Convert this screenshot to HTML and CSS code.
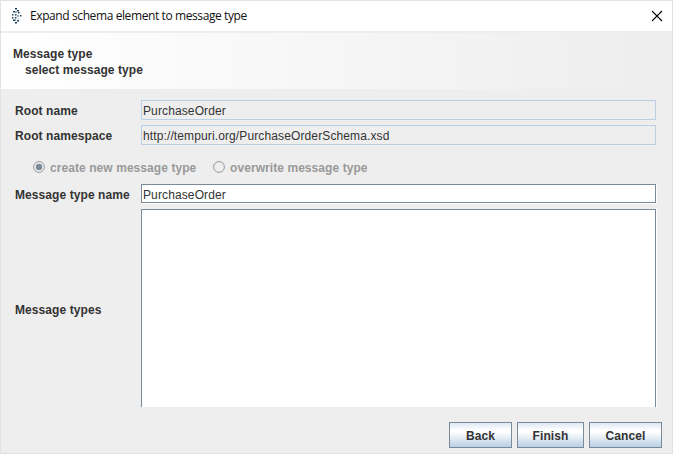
FILE: index.html
```html
<!DOCTYPE html>
<html lang="en">
<head>
<meta charset="utf-8">
<title>Expand schema element to message type</title>
<link rel="stylesheet" href="styles.css">
</head>
<body>
<div class="window">
  <header class="titlebar">
    <svg class="logo" width="12" height="18" viewBox="0 0 12 18">
      <g fill="#17405f">
        <rect x="4" y="1" width="2" height="1.5"/><rect x="6" y="3" width="2" height="1.5"/>
        <rect x="2" y="4" width="2" height="1.5"/><rect x="7" y="5" width="1.5" height="1.5"/>
        <rect x="1" y="7" width="1.5" height="1.5"/><rect x="4" y="7" width="1.5" height="1.5"/>
        <rect x="9" y="8" width="1.5" height="1.5"/><rect x="1" y="10" width="1.5" height="1.5"/>
        <rect x="4" y="10" width="1.5" height="1.5"/><rect x="2" y="12.5" width="2" height="1.5"/>
        <rect x="6" y="13" width="2" height="1.5"/><rect x="4" y="15" width="2" height="1.5"/>
      </g>
      <g fill="#9aaebb">
        <rect x="4" y="4" width="2" height="2"/><rect x="6" y="8" width="2" height="2"/>
        <rect x="7" y="11" width="1" height="1"/><rect x="4" y="12" width="1" height="2"/>
      </g>
    </svg>
    <span class="title">Expand schema element to message type</span>
    <svg class="close" width="12" height="12" viewBox="0 0 12 12"><path d="M1 1L11 11M11 1L1 11" stroke="#000" stroke-width="1.1"/></svg>
  </header>
  <section class="banner">
    <div class="banner-title">Message type</div>
    <div class="banner-text">select message type</div>
  </section>
  <main class="form">
    <label class="label">Root name</label>
    <div class="field readonly">PurchaseOrder</div>
    <label class="label">Root namespace</label>
    <div class="field readonly">http://tempuri.org/PurchaseOrderSchema.xsd</div>
    <div class="options">
      <svg width="12" height="12" viewBox="0 0 12 12"><circle cx="6" cy="6" r="5.4" fill="none" stroke="#999"/><circle cx="6" cy="6" r="3.2" fill="#7a8a99"/></svg>
      <span class="create">create new message type</span>
      <svg width="12" height="12" viewBox="0 0 12 12"><circle cx="6" cy="6" r="5.4" fill="none" stroke="#999"/></svg>
      <span class="overwrite">overwrite message type</span>
    </div>
    <label class="label">Message type name</label>
    <div class="field editable">PurchaseOrder</div>
    <label class="label types">Message types</label>
    <div class="list"></div>
  </main>
  <footer class="actions">
    <button class="back">Back</button>
    <button class="finish">Finish</button>
    <button class="cancel">Cancel</button>
  </footer>
</div>
</body>
</html>
```
FILE: styles.css
```css
* { box-sizing: border-box; }
body { margin: 0; font: 12px/14px "Liberation Sans", Arial, sans-serif; color: #333; }
.window { width: 673px; height: 454px; border: 1px solid #e2e2e2; background: #eee; overflow: hidden; white-space: nowrap; }
.titlebar { display: flex; align-items: center; height: 30px; padding: 0 9px 0 10px; background: #fff; }
.logo { margin-right: 7px; }
.title { flex: 1; font: 12px/16px "Open Sans", "Noto Sans", sans-serif; letter-spacing: -0.4px; color: #111; }
.banner { height: 56px; margin-top: 2px; padding: 13px 12px; font-weight: bold; letter-spacing: 0.06px; line-height: 16px; background: linear-gradient(to right, #fff, #eee 95%); }
.banner-text { margin-left: 12px; }
.form { display: grid; grid-template-columns: 126px 515px; grid-template-rows: 20px 20px 29px 20px 198px; row-gap: 5px; padding: 11px 0 0 14px; align-items: center; }
.label { padding-top: 2px; font-weight: bold; letter-spacing: 0.08px; }
.types { padding-top: 4px; }
.field { height: 20px; padding: 3px 1px; border: 1px solid #7a8a99; background: #fff; letter-spacing: 0.12px; }
.readonly { border-color: #b8cfe5; background: #eee; }
.editable { height: 19px; align-self: start; box-shadow: 1px 1px #fff; }
.options { grid-column: 1 / -1; display: flex; align-items: center; padding-left: 18px; padding-top: 5px; color: #999; font-weight: bold; letter-spacing: 0.07px; }
.create, .overwrite { padding-top: 1px; }
.create { width: 163px; margin-left: 5px; }
.overwrite { margin-left: 5px; }
.list { height: 198px; border: 1px solid #7a8a99; border-bottom: 0; background: #fff; box-shadow: 1px 0 #fff; }
.actions { display: flex; justify-content: flex-end; gap: 5px; padding: 15px 10px 0 0; }
button { height: 26px; padding: 2px 0 0; border: 1px solid #7a8a99; border-radius: 0; font: bold 12px/14px "Liberation Sans", Arial, sans-serif; letter-spacing: 0.1px; color: #333; background: linear-gradient(#dde8f3, #fff 30%, #fff 38%, #b8cfe5); }
.back { width: 63px; }
.finish { width: 67px; }
.cancel { width: 73px; }
```
